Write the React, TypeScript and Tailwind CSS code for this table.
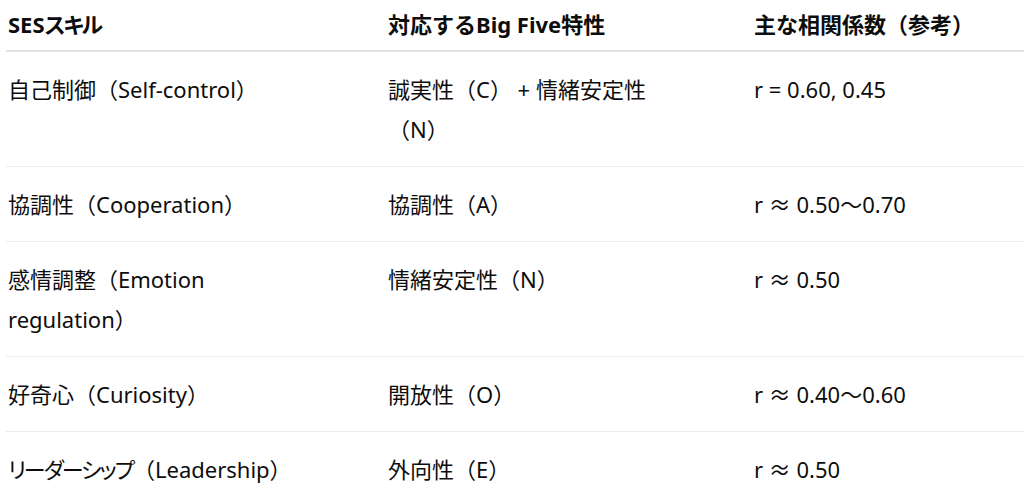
import type { ReactNode } from "react";

const Kana = ({ children }: { children: ReactNode }) => (
  <span className="tracking-[-2px] [font-feature-settings:'palt']">{children}</span>
);

const rows: [ReactNode, string, string][] = [
  ["自己制御（Self-control）", "誠実性（C） + 情緒安定性（N）", "r = 0.60, 0.45"],
  ["協調性（Cooperation）", "協調性（A）", "r ≈ 0.50〜0.70"],
  ["感情調整（Emotion regulation）", "情緒安定性（N）", "r ≈ 0.50"],
  ["好奇心（Curiosity）", "開放性（O）", "r ≈ 0.40〜0.60"],
  [
    <>
      <Kana>リーダーシップ</Kana>（Leadership）
    </>,
    "外向性（E）",
    "r ≈ 0.50",
  ],
];

export default function App() {
  return (
    <div
      className="min-h-[501px] w-[1024px] overflow-hidden bg-white pl-[6px] text-[22px] leading-[40px] text-[#0d0d0d]"
      style={{ fontFamily: '"Noto Sans", "Noto Sans CJK JP", sans-serif' }}
    >
      <div className="grid grid-cols-[382px_366px_1fr] border-b-2 border-[#e3e3e3] pb-[6px] pt-[4px] font-bold">
        <div className="pl-[2px]">
          SES<Kana>スキル</Kana>
        </div>
        <div>対応するBig Five特性</div>
        <div>主な相関係数（参考）</div>
      </div>
      {rows.map((r, i) => (
        <div
          key={i}
          className={
            "grid grid-cols-[382px_366px_1fr] py-[17px] " +
            (i < rows.length - 1 ? "border-b border-[#ececec]" : "")
          }
        >
          <div className="w-[305px] pl-[2px]">{r[0]}</div>
          <div className="w-[285px]">{r[1]}</div>
          <div>{r[2]}</div>
        </div>
      ))}
    </div>
  );
}
